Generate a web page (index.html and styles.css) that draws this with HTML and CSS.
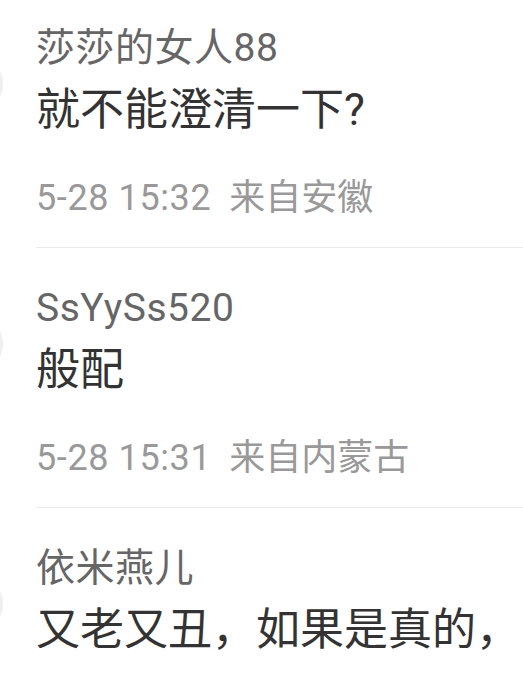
FILE: index.html
```html
<!DOCTYPE html>
<html lang="zh-CN">
<head>
<meta charset="utf-8">
<title>评论</title>
<link rel="stylesheet" href="styles.css">
</head>
<body>
<ul class="comments">
  <li class="comment">
    <div class="avatar"></div>
    <div class="body">
      <div class="name">莎莎的女人88</div>
      <div class="text">就不能澄清一下?</div>
      <div class="meta"><span class="time">5-28 15:32</span><span class="loc">来自安徽</span></div>
    </div>
  </li>
  <li class="comment">
    <div class="avatar"></div>
    <div class="body">
      <div class="name">SsYySs520</div>
      <div class="text">般配</div>
      <div class="meta"><span class="time">5-28 15:31</span><span class="loc">来自内蒙古</span></div>
    </div>
  </li>
  <li class="comment">
    <div class="avatar"></div>
    <div class="body">
      <div class="name">依米燕儿</div>
      <div class="text">又老又丑，如果是真的，</div>
    </div>
  </li>
</ul>
</body>
</html>
```
FILE: styles.css
```css
html, body {
  margin: 0;
  padding: 0;
  background: #ffffff;
  overflow: hidden;
}
body {
  font-family: Roboto, "Noto Sans CJK SC", sans-serif;
  font-weight: 400;
  width: 523px;
  height: 690px;
}
.comments {
  list-style: none;
  margin: -12px 0 0 0;
  padding: 0;
}
.comment {
  display: flex;
  align-items: flex-start;
}
.avatar {
  flex: none;
  width: 60px;
  height: 60px;
  margin-left: -57px;
  margin-top: 66px;
  border-radius: 50%;
  background: #efefef;
}
.body {
  flex: 1;
  min-width: 0;
  margin-left: 33px;
  padding: 32px 0 29px 0;
  border-bottom: 1px solid #ebebeb;
}
.name {
  font-size: 39px;
  line-height: 56px;
  color: #666666;
  letter-spacing: 0.5px;
}
.text {
  font-size: 44px;
  line-height: 68px;
  color: #333333;
}
.meta {
  font-size: 36px;
  line-height: 40px;
  margin-top: 34px;
  color: #999999;
  white-space: nowrap;
}
.time {
  letter-spacing: 0.6px;
}
.loc {
  margin-left: 18px;
}
```
